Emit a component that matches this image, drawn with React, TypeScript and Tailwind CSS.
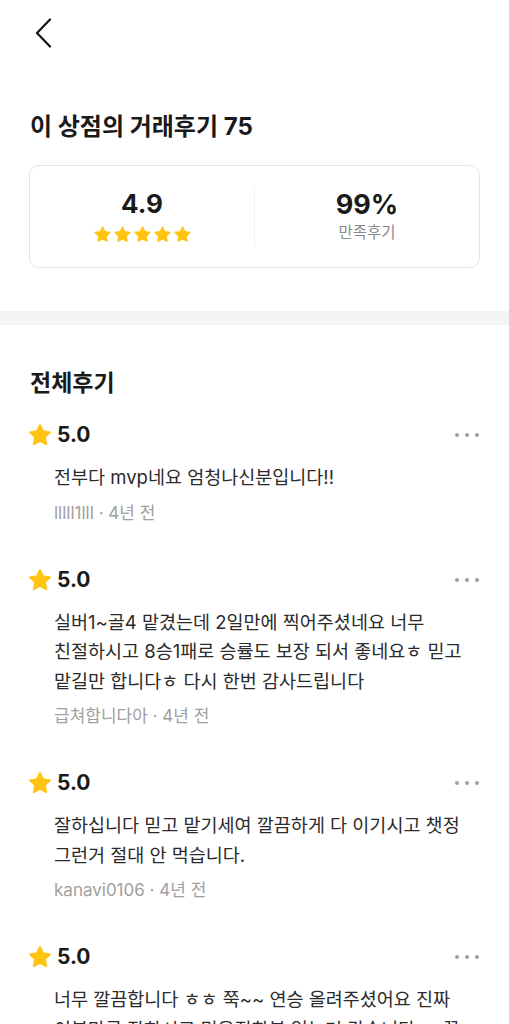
import React from "react";

const FONT = { fontFamily: 'Inter, "Noto Sans CJK KR", "Noto Sans", sans-serif' };

function Star({ size }: { size: number }) {
  return (
    <svg width={size} height={size} viewBox="0 0 24 24">
      <path
        d="M12 2.6l2.9 5.9 6.5.95-4.7 4.6 1.1 6.5L12 17.5l-5.8 3.05 1.1-6.5-4.7-4.6 6.5-.95z"
        fill="#FFC414"
        stroke="#FFC414"
        strokeWidth="1.6"
        strokeLinejoin="round"
      />
    </svg>
  );
}

type Review = { text: string; user: string };

const reviews: Review[] = [
  { text: "전부다 mvp네요 엄청나신분입니다!!", user: "lllll1lll" },
  {
    text: "실버1~골4 맡겼는데 2일만에 찍어주셨네요 너무 친절하시고 8승1패로 승률도 보장 되서 좋네요ㅎ 믿고 맡길만 합니다ㅎ 다시 한번 감사드립니다",
    user: "급쳐합니다아",
  },
  { text: "잘하십니다 믿고 맡기세여 깔끔하게 다 이기시고 챗정 그런거 절대 안 먹습니다.", user: "kanavi0106" },
  {
    text: "너무 깔끔합니다 ㅎㅎ 쭉~~ 연승 올려주셨어요 진짜 이분만큼 잘하시고 믿음직한분 없는거 같습니다 ㅠ 꼭",
    user: "gksrmf",
  },
];

function ReviewItem({ r }: { r: Review }) {
  return (
    <div className="pb-[45px]">
      <div className="flex items-center justify-between h-[24px]">
        <div className="flex items-center gap-[4px] -ml-[2px]">
          <Star size={26} />
          <span className="text-[21px] font-bold text-[#1a1a1a] leading-[24px]">5.0</span>
        </div>
        <div className="flex items-center gap-[6px] pr-[1px]">
          <span className="w-[4px] h-[4px] rounded-full bg-[#a0a0a0]" />
          <span className="w-[4px] h-[4px] rounded-full bg-[#a0a0a0]" />
          <span className="w-[4px] h-[4px] rounded-full bg-[#a0a0a0]" />
        </div>
      </div>
      <p className="mt-[16px] pl-[25px] text-[18.5px] leading-[29.5px] text-[#2b2b2b] break-keep">
        {r.text}
      </p>
      <p className="mt-[10px] pl-[25px] text-[17px] leading-[20px] text-[#a0a0a0]">
        {r.user} · 4년 전
      </p>
    </div>
  );
}

export default function App() {
  return (
    <div className="w-[509px] h-[1024px] bg-white overflow-hidden" style={FONT}>
      <div className="h-[64px] pl-[35px] pt-[18px]">
        <svg width="17" height="30" viewBox="0 0 17 30" fill="none">
          <path d="M15 1.5L2 15l13 13.5" stroke="#111" strokeWidth="2.2" strokeLinecap="round" strokeLinejoin="round" />
        </svg>
      </div>
      <div className="px-[29px]">
        <h1 className="mt-[49px] pl-[1px] text-[24px] leading-[28px] font-bold text-[#1a1a1a]">
          이 상점의 거래후기 75
        </h1>
        <div className="mt-[24px] h-[103px] rounded-[10px] border border-[#e6e6e6] flex items-center">
          <div className="flex-1 flex flex-col items-center">
            <span className="text-[26px] leading-[30px] font-bold text-[#1a1a1a]">4.9</span>
            <div className="mt-[6px] flex gap-[1px]">
              <Star size={19} />
              <Star size={19} />
              <Star size={19} />
              <Star size={19} />
              <Star size={19} />
            </div>
          </div>
          <div className="w-px h-[60px] bg-[#f0f0f0]" />
          <div className="flex-1 flex flex-col items-center">
            <span className="text-[27px] leading-[30px] font-bold text-[#1a1a1a]">99%</span>
            <span className="mt-[2px] text-[15.5px] leading-[22px] text-[#8a8a8a]">만족후기</span>
          </div>
        </div>
      </div>
      <div className="mt-[43px] h-[14px] bg-[#f4f4f4]" />
      <div className="px-[29px]">
        <h2 className="mt-[44px] pl-[1px] text-[23px] leading-[28px] font-bold text-[#1a1a1a]">전체후기</h2>
        <div className="mt-[26px]">
          {reviews.map((r, i) => (
            <ReviewItem key={i} r={r} />
          ))}
        </div>
      </div>
    </div>
  );
}
